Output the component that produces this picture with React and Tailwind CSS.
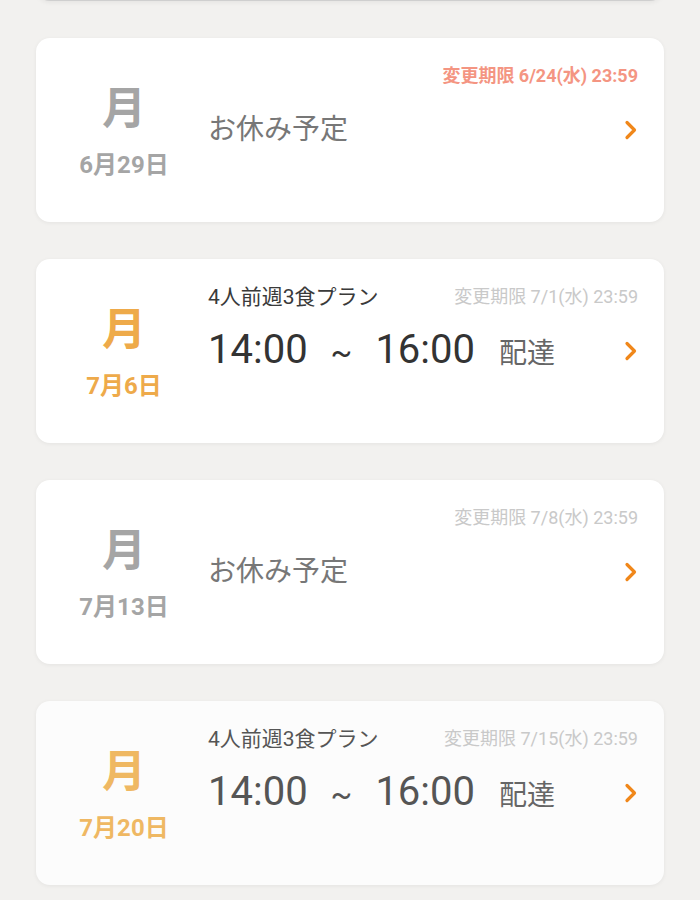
const font = { fontFamily: 'Roboto, "Noto Sans CJK JP", sans-serif' };

const days = [
  { day: '月', date: '6月29日', off: true, deadline: '変更期限 6/24(水) 23:59', urgent: true },
  { day: '月', date: '7月6日', off: false, deadline: '変更期限 7/1(水) 23:59' },
  { day: '月', date: '7月13日', off: true, deadline: '変更期限 7/8(水) 23:59' },
  { day: '月', date: '7月20日', off: false, deadline: '変更期限 7/15(水) 23:59', faded: true },
];

const Chevron = () => (
  <svg width="14" height="22" viewBox="0 0 14 22" fill="none">
    <path d="M3 3.5l7.5 7.5-7.5 7.5" stroke="#f0871a" strokeWidth="3.2" strokeLinecap="round" strokeLinejoin="round" />
  </svg>
);

const DayCard = ({ item }) => {
  const dayColor = item.off ? 'text-[#a5a5a5]' : item.faded ? 'text-[#efb863]' : 'text-[#eeaa4a]';
  const timeColor = item.faded ? 'text-[#555]' : 'text-[#333]';
  return (
    <div
      className={`h-[184px] rounded-[14px] shadow-[0_1px_4px_rgba(0,0,0,0.06)] flex items-stretch ${item.faded ? 'bg-[#fcfcfc]' : 'bg-white'}`}
    >
      <div className="w-[172px] pl-[4px] flex flex-col items-center justify-center pt-[4px]">
        <div className={`text-[44px] font-bold leading-[44px] ${dayColor}`}>{item.day}</div>
        <div className={`text-[24px] font-bold leading-[24px] mt-[22px] ${dayColor}`}>{item.date}</div>
      </div>
      <div className="flex-1 flex flex-col pr-[26px] pt-[27px] pb-[49px]">
        <div className="flex items-center justify-between h-[22px]">
          <div className={`text-[21px] leading-[22px] ${item.faded ? 'text-[#555]' : 'text-[#3a3a3a]'}`}>
            {item.off ? '' : '4人前週3食プラン'}
          </div>
          <div
            className={`text-[18px] leading-[22px] ${item.urgent ? 'text-[#f49582] font-bold' : 'text-[#c9c9c9]'}`}
          >
            {item.deadline}
          </div>
        </div>
        <div className="flex items-center justify-between flex-1">
          {item.off ? (
            <div className="text-[28px] leading-[36px] text-[#777]">お休み予定</div>
          ) : (
            <div className="flex items-baseline leading-[44px] pt-[2px]">
              <span className={`text-[40px] ${timeColor}`}>14:00</span>
              <span className={`text-[32px] mx-[23px] ${timeColor}`}>~</span>
              <span className={`text-[40px] ${timeColor}`}>16:00</span>
              <span className="text-[28px] text-[#666] ml-[24px]">配達</span>
            </div>
          )}
          <Chevron />
        </div>
      </div>
    </div>
  );
};

export default function App() {
  return (
    <div className="min-h-[900px] bg-[#f2f1ef] overflow-hidden" style={font}>
      <div className="px-[36px] flex flex-col gap-[37px] -mt-[184px]">
        <div className="h-[185px] rounded-[14px] bg-[#f2f1ef] border-b border-[#cfcfcf] shadow-[0_2px_4px_rgba(0,0,0,0.05)]" />
        {days.map((d) => (
          <DayCard key={d.date} item={d} />
        ))}
      </div>
    </div>
  );
}
